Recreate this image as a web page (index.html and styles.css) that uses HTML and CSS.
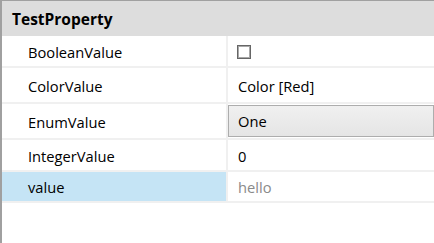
FILE: index.html
```html
<!DOCTYPE html>
<html lang="en">
<head>
  <meta charset="UTF-8" />
  <title>Property Grid</title>
  <link rel="stylesheet" href="styles.css">
</head>
<body>
  <div class="grid">
    <div class="category">TestProperty</div>

    <div class="row row-bool">
      <div class="name">BooleanValue</div>
      <div class="value"><span class="check"></span></div>
    </div>

    <div class="row row-color">
      <div class="name">ColorValue</div>
      <div class="value">Color [Red]</div>
    </div>

    <div class="row row-enum">
      <div class="name">EnumValue</div>
      <div class="value value-combo"><div class="combo">One</div></div>
    </div>

    <div class="row row-int">
      <div class="name">IntegerValue</div>
      <div class="value">0</div>
    </div>

    <div class="row row-sel">
      <div class="name selected">value</div>
      <div class="value readonly">hello</div>
    </div>
  </div>
</body>
</html>
```

FILE: styles.css
```css
body {
  margin: 0;
  font-family: "Open Sans", "Noto Sans", sans-serif;
  font-size: 14.7px;
  color: #000;
  background: #fff;
}

.grid {
  height: 243px;
  box-sizing: border-box;
  border-top: 1px solid #a0a0a0;
  border-left: 2px solid #a0a0a0;
}

.category {
  height: 35px;
  line-height: 36px;
  background: #dddddd;
  padding-left: 10px;
  font-weight: bold;
  font-size: 15.5px;
}

.row {
  display: grid;
  grid-template-columns: 224px 1fr;
  column-gap: 2px;
  background: #f0f0f0;
  border-bottom: 2px solid #f0f0f0;
}

.name, .value {
  background: #fff;
  display: flex;
  align-items: center;
  padding-top: 1px;
}

.name {
  padding-left: 26px;
}

.value {
  padding-left: 10px;
}

.row-bool { height: 30px; }
.row-color { height: 34px; }
.row-enum { height: 34px; }
.row-int { height: 30px; }
.row-sel { height: 29px; }

.check {
  width: 12px;
  height: 12px;
  margin-left: -1px;
  border: 1px solid #666;
  box-shadow: inset 0 0 0 1px #a8a8a8;
  background: #fff;
}

.value-combo {
  padding-left: 0;
  padding-top: 0;
  align-items: stretch;
}

.combo {
  flex: 1;
  margin-top: 1px;
  margin-bottom: 1px;
  border: 1px solid #adadad;
  background: linear-gradient(#f0f0f0, #e5e5e5);
  padding-left: 9px;
  display: flex;
  align-items: center;
}

.selected {
  background: #c5e4f5;
}

.readonly {
  color: #8a8a8a;
}
```
